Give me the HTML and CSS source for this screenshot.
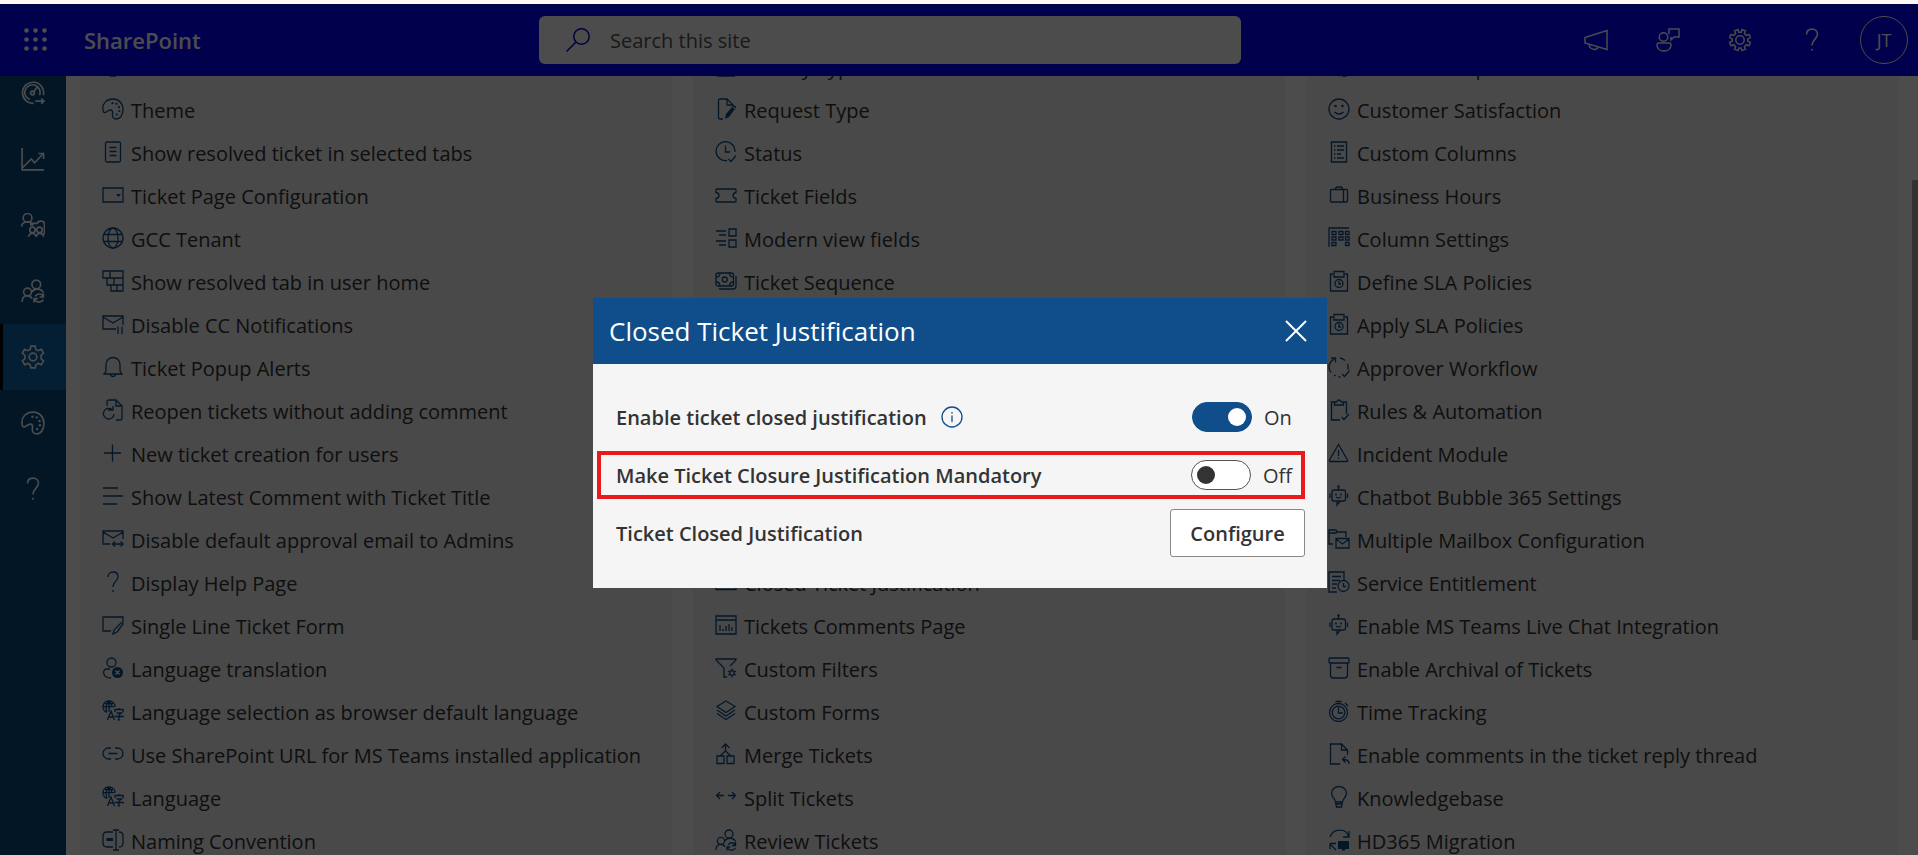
FILE: index.html
```html
<!DOCTYPE html>
<html lang="en">
<head>
<meta charset="utf-8">
<title>SharePoint - Settings</title>
<link rel="stylesheet" href="styles.css">
</head>
<body>
<svg class="sprite" aria-hidden="true">
  <symbol id="palette" viewBox="0 0 22 22"><path d="M1 12C0 5 5 1 11 1c6 0 10 4.500 10 10.500C21 17 18 21 14.500 21c-3.500 0-4.500-2.500-4-5.500.4-2.500-.5-3.500-2-3.500C5.500 12 4 15.500 2 14.500 1.400 14 1 13 1 12z"/><g class="f"><circle cx="10.500" cy="5.200" r="1.100"/><circle cx="14.500" cy="5.800" r="1.100"/><circle cx="17" cy="9.200" r="1.100"/><circle cx="17.300" cy="13" r="1.100"/><circle cx="14.800" cy="16.500" r="1.100"/></g></symbol>
  <symbol id="doc" viewBox="0 0 22 22"><rect x="3.500" y="1" width="15" height="20" rx="1.500"/><path d="M7.500 6.500h7M7.500 10.500h7M7.500 14.500h7"/></symbol>
  <symbol id="combo" viewBox="0 0 22 22"><path d="M1 4h20v14H1z"/><path class="f" d="M14 10h5l-2.500 3z"/></symbol>
  <symbol id="globe" viewBox="0 0 22 22"><circle cx="11" cy="11" r="10"/><ellipse cx="11" cy="11" rx="5" ry="10"/><path d="M2 7.500h18M2 14.500h18"/></symbol>
  <symbol id="bricks" viewBox="0 0 22 22"><path d="M1 1h20v20H9v-6H5V8H1zM1 8h20M5 15h16M8 1v7M12 8v7M15 15v6"/></symbol>
  <symbol id="mailpause" viewBox="0 0 22 22"><path d="M14 16H1V3h20v9M1 4l10 6 10-6M16 13.500v7.500M20 13.500v7.500"/></symbol>
  <symbol id="bell" viewBox="0 0 22 22"><path d="M4 15V8.500a7 7 0 0 1 14 0V15l2 3H2zM8.500 18a2.500 2.500 0 0 0 5 0"/></symbol>
  <symbol id="reopen" viewBox="0 0 22 22"><path d="M5 7V3q0-2 2-2h7l6 6v12q0 2-2 2h-4M14 1v6h6M10 10.500A5.300 5.300 0 1 0 12 15M6 11h5V7"/></symbol>
  <symbol id="plus" viewBox="0 0 22 22"><path d="M2 11h17M10.500 2.500v17"/></symbol>
  <symbol id="lines" viewBox="0 0 22 22"><path d="M1 3h15M1 11h20M1 19h14"/></symbol>
  <symbol id="mailarrow" viewBox="0 0 22 22"><path d="M8 16H1V3h20v8M1 4l10 6 10-6M10.500 16H21M13 13.500 10.500 16l2.500 2.500M18.500 13.500 21 16l-2.500 2.500"/></symbol>
  <symbol id="help" viewBox="0 0 22 22"><path d="M6 6c0-3 2-5 5-5s5 2 5 4.700c0 4.300-5 4.800-5 10.300"/><circle class="f" cx="11" cy="20" r=".9"/></symbol>
  <symbol id="form" viewBox="0 0 22 22"><path d="M9 17H1V3h20v5M11 20l1-4 7-7q2-1 2 1l-6 8z"/></symbol>
  <symbol id="userx" viewBox="0 0 22 22"><circle cx="9.500" cy="5.500" r="4.500"/><path d="M8 12H4c-4 1-3.500 9 5 9"/><circle class="f" cx="15.500" cy="15.500" r="5.500"/><path class="cut" d="m13.500 13.500 4 4m0-4-4 4"/></symbol>
  <symbol id="lang" viewBox="0 0 22 22"><path d="M5 12.500A6 6 0 1 1 13 7M1 6.700h11M7 .700v11M3 3.500h8M7 .700C3.500 4 3.500 9 5 12M7 .700Q10 4 10 7M5.500 20 9 11l3.500 9M6.500 17h5M13 12V9.500h8V12M17 9.500V8M14.500 13h5l-2.500 2v5l-1.500-.5M12.500 16.500H22"/></symbol>
  <symbol id="link" viewBox="0 0 22 22"><path d="M9 5H6.500a5.500 5.500 0 0 0 0 11H9M13 5h2.500a5.500 5.500 0 0 1 0 11H13M6.500 10.500h9"/></symbol>
  <symbol id="rename" viewBox="0 0 22 22"><path d="M11 3H5Q1 3 1 7v7q0 4 4 4h6M17 3q4 0 4 4v7q0 4-4 4M14 1v20M11 1h6M11 21h6"/><path class="w" d="M4.500 10.500H11"/></symbol>
  <symbol id="docedit" viewBox="0 0 22 22"><path d="M8 21H5q-1.500 0-1.500-1.500v-17Q3.500 1 5 1h7l6 6v2M12 1v6h6"/><path class="f" d="m10 21 1-5 6-7 3 2-6 8zM18 8l1-1 2.500 2-1 1.500z"/></symbol>
  <symbol id="clockok" viewBox="0 0 22 22"><path d="M12 19.500A9.500 9.500 0 1 1 20 11M10.500 4.500V11H15M13.500 18l2.500 2.500 5-6"/></symbol>
  <symbol id="ticket" viewBox="0 0 22 22"><path d="M2 5h18q1 0 1 1v2.500q-3 .5-3 3t3 3V17q0 1-1 1H2q-1 0-1-1v-2.500q3-.5 3-3t-3-3V6q0-1 1-1z"/></symbol>
  <symbol id="fields" viewBox="0 0 22 22"><path d="M1 4h10M4 8h7M1 14h10M4 18h7M14 2h7v7h-7zM14 13h7v7h-7z"/></symbol>
  <symbol id="cash" viewBox="0 0 22 22"><rect x="1" y="3" width="17.500" height="13" rx="2"/><circle cx="9.800" cy="9.500" r="2.500"/><path d="M1 7q4 0 4-4M1 12q4 0 4 4M18.500 7q-4 0-4-4M18.500 12q-4 0-4 4M21 6v10q0 3-3 3H4"/></symbol>
  <symbol id="barline" viewBox="0 0 22 22"><path d="M1 4h20v14.500H1z"/></symbol>
  <symbol id="chart" viewBox="0 0 22 22"><path d="M1 2h20v18H1zM1 6h20M5 17v-6M8 17v-2M11 17v-5M14 17v-7M17 17v-4"/></symbol>
  <symbol id="filter" viewBox="0 0 22 22"><path d="M12 20H9v-9L1 3V2h20v1l-6 6"/><circle cx="17" cy="16" r="2.300"/><path d="M17 11.500v2M17 18.500v2M13 14l2 1M19 17l2 1M13 18l2-1M19 15l2-1"/></symbol>
  <symbol id="layers" viewBox="0 0 22 22"><path d="m11 1 9 5.500-9 6-9-6zM2 10l9 6 9-6M2 13.500l9 6 9-6"/></symbol>
  <symbol id="merge" viewBox="0 0 22 22"><path d="M2 13h7v7.500H2zM12 13h7v7.500h-7zM10.500 1v7L5 13M10.500 8l5.500 5M6.500 5l4-4 4 4"/></symbol>
  <symbol id="split" viewBox="0 0 22 22"><path d="M9 9.500H1.500M5 6 1.500 9.500 5 13M13 9.500h7.500M17 6l3.500 3.500L17 13"/></symbol>
  <symbol id="users" viewBox="0 0 22 22"><circle cx="14" cy="5" r="4"/><circle cx="6" cy="12" r="3.600"/><path d="M1 21c0-7 7-7 9-3M10 12c1.500-3.500 8.500-4 10.500.5M20.500 13v3.500H17M12 21.500V18h3.500M20.500 16c-1.500-3-6-3-7.500 0M12.500 19c2 3 6 3 8 0"/></symbol>
  <symbol id="smile" viewBox="0 0 22 22"><circle cx="11" cy="11" r="10"/><path d="M6.500 14q4.500 4 9 0"/><g class="f"><circle cx="7.500" cy="8" r="1.300"/><circle cx="14.500" cy="8" r="1.300"/></g></symbol>
  <symbol id="columns" viewBox="0 0 22 22"><path d="M3.500 1h15v20h-15zM6 5h1.500M9 5h7M6 9h1.500M9 9h7M6 13h1.500M9 13h4M6 17h1.500M9 17h7"/></symbol>
  <symbol id="bag" viewBox="0 0 22 22"><rect x="2.500" y="5.500" width="17" height="12.500" rx="1"/><path d="M7.500 5.500q0-2.500 2-2.500h3q2 0 2 2.500M15.500 5.500V18"/></symbol>
  <symbol id="grid" viewBox="0 0 22 22"><path d="M1 20V1h20M4 4.500h4v3H4zM11 4.500h4v3h-4zM17.500 4.500H21v3h-3.500zM4 10h4v3H4zM11 10h4v3h-4zM17.500 10H21v3h-3.500zM4 15.500h4v3H4zM17.500 15.500H21v3h-3.500z"/></symbol>
  <symbol id="sla" viewBox="0 0 22 22"><path d="M5 4H2.500v17h17V4H17M6 1.500h10V7H6z"/><circle cx="11" cy="13.500" r="4"/><path d="M11 11v3h2"/></symbol>
  <symbol id="flow" viewBox="0 0 22 22"><path d="M6 3C0 7 0 13 3 16.500M3 2h4.500v4.500M12 2q3 .500 5 2.500M19.500 8q1 2.500.5 5.500M6 19l2 1M10.500 21h2M14 18l2.500 2.500 5-6"/></symbol>
  <symbol id="rules" viewBox="0 0 22 22"><path d="M6 3H3.500v18H12M16 3h2.500v12M6.500 3h2q2.500-4 5 0h2v3h-9zM13.500 18l2.500 2.500 5-5.500"/></symbol>
  <symbol id="warn" viewBox="0 0 22 22"><path d="M10.500 2.500 1.500 18q-.500 1.500 1 1.500h16q1.500 0 1-1.500zM10.500 8v6M10.500 15.500v1.500"/></symbol>
  <symbol id="bot" viewBox="0 0 22 22"><rect x="4" y="5" width="13.500" height="11" rx="2"/><path d="M10.500 1.500V5M2 8.500v4.500M19.500 8.500v4.500M9 16v4l3.500-4M8 12q2.500 2 5 0"/><g class="f"><circle cx="10.500" cy="1.500" r="1.200"/><circle cx="8" cy="9.500" r="1"/><circle cx="13" cy="9.500" r="1"/></g></symbol>
  <symbol id="mailbox" viewBox="0 0 22 22"><path d="M5 16H1V2h7l1 2h9v5M1 5h7l1-1M8 10.500h13V20H8zM8 11l6.500 5 6.500-5"/></symbol>
  <symbol id="service" viewBox="0 0 22 22"><path d="M9 21H1V1h15v8M4 5.500h9M4 9.500h8M4 13h5M4 17h4"/><circle cx="15.500" cy="15" r="5.500"/><path d="M15.500 12v3.500h2.500"/></symbol>
  <symbol id="archive" viewBox="0 0 22 22"><rect x="1" y="1" width="20" height="5" rx="1"/><path d="M2.500 6v12q0 3 3 3h11q3 0 3-3V6M8.500 10.500h5"/></symbol>
  <symbol id="timer" viewBox="0 0 22 22"><circle cx="10.500" cy="12.500" r="9"/><circle cx="10.500" cy="12.500" r="6.300"/><path d="M7.500 1.500h6M10.500 7v6H15M17 3l3 3"/></symbol>
  <symbol id="reply" viewBox="0 0 22 22"><path d="M12 21H2.500V1h11l6 6v5M13.500 1v6h6M21 21q.5-4.500-6-4.500M17.500 13.500l-3 3 3 3"/></symbol>
  <symbol id="bulb" viewBox="0 0 22 22"><path d="M7.500 16c0-3-4-4.500-4-9a7.500 6.500 0 0 1 15 0c0 4.500-4 6-4 9zM7.500 16l1 5h5l1-5M8 18h6"/></symbol>
  <symbol id="migrate" viewBox="0 0 22 22"><path d="M2 8C5-1 18-1 20.500 7M21 2v6h-6M2 14.500h6M2 14.500V20M2 15l6 6"/><path class="f" d="M10 12h11v8h-4v1.500h-3V20h-4z"/></symbol>
  <symbol id="gauge" viewBox="0 0 22 22"><path d="M11.500 20.500A9.700 9.700 0 1 1 20.500 13M8 17A7 7 0 1 1 17 13M11 10.500l4-5M13 18.500h8M18.500 16l2.500 2.500-2.500 2.500"/><circle cx="10.500" cy="11" r="1.700"/></symbol>
  <symbol id="trend" viewBox="0 0 22 22"><path d="M1 1v20h20M1 19.500l8.500-8.500 3 3.500 8-8.500M16 6h4.700v5"/></symbol>
  <symbol id="team" viewBox="0 0 22 22"><circle cx="6" cy="4.500" r="4"/><path d="M.500 12.500c0-5 9.500-6 10.500-1M9 12V9.500h6q.5-2 3-2 3.500 0 3.500 3V19h-2"/><circle cx="10.500" cy="15.500" r="2.500"/><circle cx="17" cy="15.500" r="2.500"/><path d="M6.500 21.500q4-6 7.500 0 3-6 7 0"/></symbol>
  <symbol id="gear" viewBox="0 0 22 22"><path d="M9 1h4l.6 3 2.200 1.200L18.700 4l2 3.500-2.300 2v3l2.300 2-2 3.500-2.900-1.100-2.200 1.200L13 21H9l-.6-2.900-2.200-1.200L3.300 18l-2-3.500 2.300-2v-3l-2.300-2 2-3.500 2.900 1.200L8.400 4z"/><circle cx="11" cy="11" r="3.500"/></symbol>
  <symbol id="cog" viewBox="0 0 24 24"><path d="M10 1.500l.7 2.700h2.600l.7-2.700 3.400 1.400-1 2.600 1.900 1.900 2.700-1 1.400 3.300-2.600 1.200v2.300l2.600 1.100-1.400 3.400-2.700-1-1.900 1.900 1 2.600-3.400 1.400-1-2.600h-2l-1 2.600-3.400-1.400 1-2.600-1.900-1.900-2.700 1-1.400-3.400 2.600-1.100v-2.300L1.600 9.700 3 6.400l2.700 1 1.900-1.900-1-2.600z"/><circle cx="12" cy="12" r="4.200"/></symbol>
  <symbol id="mega" viewBox="0 0 24 24"><path d="M23 2.500v19L1 15V9.500zM5 16.500c1 6 8 6 9 2.500"/></symbol>
  <symbol id="feedback" viewBox="0 0 24 24"><circle cx="7.500" cy="9" r="4.300"/><path d="M2 15h11q2 0 2 2c0 8-14 8-14 0q0-2 1-2zM13 6V1h10v8h-5l-3 3V9"/></symbol>
  <symbol id="search" viewBox="0 0 24 24"><circle cx="15.500" cy="8.500" r="7.700"/><path d="M10 14 .5 23.500"/></symbol>
  <symbol id="waffle" viewBox="0 0 24 24"><g class="f"><circle cx="2.500" cy="2.500" r="2.300"/><circle cx="11.500" cy="2.500" r="2.300"/><circle cx="20.500" cy="2.500" r="2.300"/><circle cx="2.500" cy="11.500" r="2.300"/><circle cx="11.500" cy="11.500" r="2.300"/><circle cx="20.500" cy="11.500" r="2.300"/><circle cx="2.500" cy="20.500" r="2.300"/><circle cx="11.500" cy="20.500" r="2.300"/><circle cx="20.500" cy="20.500" r="2.300"/></g></symbol>
  <symbol id="close" viewBox="0 0 22 22"><path d="m1 1 20 20M21 1 1 21"/></symbol>
  <symbol id="info" viewBox="0 0 22 22"><circle cx="11" cy="11" r="10"/><path d="M11 9.500V16M11 6v1.500"/></symbol>
</svg>

<div class="page">
  <header class="topbar">
    <div class="brand">
      <button class="bar-btn" aria-label="App launcher"><svg class="icon big"><use href="#waffle"/></svg></button>
      <a class="brand-name" href="#">SharePoint</a>
    </div>
    <label class="search">
      <svg class="icon big"><use href="#search"/></svg>
      <input type="search" placeholder="Search this site" aria-label="Search this site">
    </label>
    <div class="actions">
      <button class="bar-btn" aria-label="Announcements"><svg class="icon big"><use href="#mega"/></svg></button>
      <button class="bar-btn" aria-label="Feedback"><svg class="icon big"><use href="#feedback"/></svg></button>
      <button class="bar-btn" aria-label="Settings"><svg class="icon big"><use href="#cog"/></svg></button>
      <button class="bar-btn" aria-label="Help"><svg class="icon big"><use href="#help"/></svg></button>
      <button class="bar-btn" aria-label="Account"><span class="avatar">JT</span></button>
    </div>
  </header>

  <div class="body">
    <nav class="rail" aria-label="Main">
      <a href="#" aria-label="Dashboard"><svg class="icon big"><use href="#gauge"/></svg></a>
      <a href="#" aria-label="Reports"><svg class="icon big"><use href="#trend"/></svg></a>
      <a href="#" aria-label="Teams"><svg class="icon big"><use href="#team"/></svg></a>
      <a href="#" aria-label="Users"><svg class="icon big"><use href="#users"/></svg></a>
      <a class="active" href="#" aria-label="Settings"><svg class="icon big"><use href="#gear"/></svg></a>
      <a href="#" aria-label="Theme"><svg class="icon big"><use href="#palette"/></svg></a>
      <a href="#" aria-label="Help"><svg class="icon big"><use href="#help"/></svg></a>
    </nav>

    <main class="content">
      <ul class="card">
        <li><a href="#"><svg class="icon"><use href="#bulb"/></svg>General</a></li>
        <li><a href="#"><svg class="icon"><use href="#palette"/></svg>Theme</a></li>
        <li><a href="#"><svg class="icon"><use href="#doc"/></svg>Show resolved ticket in selected tabs</a></li>
        <li><a href="#"><svg class="icon"><use href="#combo"/></svg>Ticket Page Configuration</a></li>
        <li><a href="#"><svg class="icon"><use href="#globe"/></svg>GCC Tenant</a></li>
        <li><a href="#"><svg class="icon"><use href="#bricks"/></svg>Show resolved tab in user home</a></li>
        <li><a href="#"><svg class="icon"><use href="#mailpause"/></svg>Disable CC Notifications</a></li>
        <li><a href="#"><svg class="icon"><use href="#bell"/></svg>Ticket Popup Alerts</a></li>
        <li><a href="#"><svg class="icon"><use href="#reopen"/></svg>Reopen tickets without adding comment</a></li>
        <li><a href="#"><svg class="icon"><use href="#plus"/></svg>New ticket creation for users</a></li>
        <li><a href="#"><svg class="icon"><use href="#lines"/></svg>Show Latest Comment with Ticket Title</a></li>
        <li><a href="#"><svg class="icon"><use href="#mailarrow"/></svg>Disable default approval email to Admins</a></li>
        <li><a href="#"><svg class="icon"><use href="#help"/></svg>Display Help Page</a></li>
        <li><a href="#"><svg class="icon"><use href="#form"/></svg>Single Line Ticket Form</a></li>
        <li><a href="#"><svg class="icon"><use href="#userx"/></svg>Language translation</a></li>
        <li><a href="#"><svg class="icon"><use href="#lang"/></svg>Language selection as browser default language</a></li>
        <li><a href="#"><svg class="icon"><use href="#link"/></svg>Use SharePoint URL for MS Teams installed application</a></li>
        <li><a href="#"><svg class="icon"><use href="#lang"/></svg>Language</a></li>
        <li><a href="#"><svg class="icon"><use href="#rename"/></svg>Naming Convention</a></li>
      </ul>
      <ul class="card">
        <li><a href="#"><svg class="icon"><use href="#sla"/></svg>Priority Type</a></li>
        <li><a href="#"><svg class="icon"><use href="#docedit"/></svg>Request Type</a></li>
        <li><a href="#"><svg class="icon"><use href="#clockok"/></svg>Status</a></li>
        <li><a href="#"><svg class="icon"><use href="#ticket"/></svg>Ticket Fields</a></li>
        <li><a href="#"><svg class="icon"><use href="#fields"/></svg>Modern view fields</a></li>
        <li><a href="#"><svg class="icon"><use href="#cash"/></svg>Ticket Sequence</a></li>
        <li></li>
        <li></li>
        <li></li>
        <li></li>
        <li></li>
        <li></li>
        <li><a href="#"><svg class="icon"><use href="#barline"/></svg>Closed Ticket Justification</a></li>
        <li><a href="#"><svg class="icon"><use href="#chart"/></svg>Tickets Comments Page</a></li>
        <li><a href="#"><svg class="icon"><use href="#filter"/></svg>Custom Filters</a></li>
        <li><a href="#"><svg class="icon"><use href="#layers"/></svg>Custom Forms</a></li>
        <li><a href="#"><svg class="icon"><use href="#merge"/></svg>Merge Tickets</a></li>
        <li><a href="#"><svg class="icon"><use href="#split"/></svg>Split Tickets</a></li>
        <li><a href="#"><svg class="icon"><use href="#users"/></svg>Review Tickets</a></li>
      </ul>
      <ul class="card">
        <li><a href="#"><svg class="icon"><use href="#users"/></svg>Service Group</a></li>
        <li><a href="#"><svg class="icon"><use href="#smile"/></svg>Customer Satisfaction</a></li>
        <li><a href="#"><svg class="icon"><use href="#columns"/></svg>Custom Columns</a></li>
        <li><a href="#"><svg class="icon"><use href="#bag"/></svg>Business Hours</a></li>
        <li><a href="#"><svg class="icon"><use href="#grid"/></svg>Column Settings</a></li>
        <li><a href="#"><svg class="icon"><use href="#sla"/></svg>Define SLA Policies</a></li>
        <li><a href="#"><svg class="icon"><use href="#sla"/></svg>Apply SLA Policies</a></li>
        <li><a href="#"><svg class="icon"><use href="#flow"/></svg>Approver Workflow</a></li>
        <li><a href="#"><svg class="icon"><use href="#rules"/></svg>Rules &amp; Automation</a></li>
        <li><a href="#"><svg class="icon"><use href="#warn"/></svg>Incident Module</a></li>
        <li><a href="#"><svg class="icon"><use href="#bot"/></svg>Chatbot Bubble 365 Settings</a></li>
        <li><a href="#"><svg class="icon"><use href="#mailbox"/></svg>Multiple Mailbox Configuration</a></li>
        <li><a href="#"><svg class="icon"><use href="#service"/></svg>Service Entitlement</a></li>
        <li><a href="#"><svg class="icon"><use href="#bot"/></svg>Enable MS Teams Live Chat Integration</a></li>
        <li><a href="#"><svg class="icon"><use href="#archive"/></svg>Enable Archival of Tickets</a></li>
        <li><a href="#"><svg class="icon"><use href="#timer"/></svg>Time Tracking</a></li>
        <li><a href="#"><svg class="icon"><use href="#reply"/></svg>Enable comments in the ticket reply thread</a></li>
        <li><a href="#"><svg class="icon"><use href="#bulb"/></svg>Knowledgebase</a></li>
        <li><a href="#"><svg class="icon"><use href="#migrate"/></svg>HD365 Migration</a></li>
      </ul>
      <div class="scroll-thumb"></div>
    </main>
  </div>
</div>

<div class="overlay">
  <section class="dialog" role="dialog" aria-modal="true" aria-labelledby="dlg-title">
    <header class="dialog-head">
      <h2 id="dlg-title">Closed Ticket Justification</h2>
      <button class="close" aria-label="Close"><svg class="icon"><use href="#close"/></svg></button>
    </header>
    <div class="dialog-body">
      <div class="row">
        <label for="enable">Enable ticket closed justification</label>
        <svg class="icon info"><use href="#info"/></svg>
        <span class="toggle"><input id="enable" type="checkbox" role="switch" checked><span>On</span></span>
      </div>
      <div class="row marked">
        <label for="mandatory">Make Ticket Closure Justification Mandatory</label>
        <span class="toggle"><input id="mandatory" type="checkbox" role="switch"><span>Off</span></span>
      </div>
      <div class="row">
        <span id="cfg-label">Ticket Closed Justification</span>
        <button class="configure" aria-describedby="cfg-label">Configure</button>
      </div>
    </div>
  </section>
</div>
</body>
</html>
```
FILE: styles.css
```css
* { box-sizing: border-box; }

body {
  margin: 0;
  font-family: "Open Sans", "Noto Sans", sans-serif;
  font-size: 20px;
  color: #333;
  background: #fff6f2;
}

button, input { font: inherit; color: inherit; }
a { color: inherit; text-decoration: none; }
.sprite { position: absolute; width: 0; height: 0; }

.icon {
  width: 22px;
  height: 22px;
  flex: none;
  fill: none;
  stroke: currentColor;
  stroke-width: 1.3;
  color: #0f4e8a;
}
.icon.big { width: 24px; height: 24px; color: inherit; stroke-width: 1.5; }
.f { fill: currentColor; stroke: none; }
.cut { stroke: #f4f4f4; stroke-width: 1.6; }
.w { stroke-width: 3; }

.page {
  height: 100vh;
  padding-top: 4px;
  display: flex;
  flex-direction: column;
  overflow: hidden;
}

.topbar {
  flex: none;
  height: 72px;
  display: grid;
  grid-template-columns: 539fr 702fr 677fr;
  align-items: center;
  background: #00f;
  color: #fff;
}
.brand, .actions { display: flex; align-items: center; }
.actions { justify-content: flex-end; margin-right: -2px; }
.bar-btn {
  width: 72px;
  height: 72px;
  padding: 0;
  border: 0;
  background: none;
  display: grid;
  place-items: center;
}
.brand-name { padding-left: 12px; font-size: 22px; font-weight: 600; }
.search {
  height: 48px;
  padding: 0 27px;
  display: flex;
  align-items: center;
  gap: 20px;
  border-radius: 6px;
  background: #fff;
  color: #00c;
}
.search input {
  flex: 1;
  min-width: 0;
  padding: 0;
  border: 0;
  outline: 0;
  background: none;
}
.search input::placeholder { color: #555; opacity: 1; }
.avatar {
  width: 48px;
  height: 48px;
  border: 1px solid #fff;
  border-radius: 50%;
  display: grid;
  place-items: center;
  font-size: 18px;
}

.body { flex: 1; min-height: 0; display: flex; background: #fff; }

.rail {
  flex: none;
  width: 66px;
  display: flex;
  flex-direction: column;
  background: #074a80;
  color: #fff;
  overflow: hidden;
}
.rail a {
  flex: none;
  height: 66px;
  display: grid;
  place-items: center;
}
.rail a:first-child { margin-top: -16px; }
.rail .active {
  padding-right: 3px;
  border-left: 3px solid #000;
  border-radius: 2px;
  background: #0f66ac;
}

.content {
  position: relative;
  flex: 1;
  padding: 0 20px 0 14px;
  display: grid;
  grid-template-columns: repeat(3, 1fr);
  gap: 21px;
  overflow: hidden;
}
.card {
  margin: -30px 0 0;
  padding: 0 22px;
  list-style: none;
  background: #f5f5f5;
}
.card li { height: 43px; }
.card a {
  height: 43px;
  display: flex;
  align-items: center;
  gap: 7px;
  white-space: nowrap;
}
.card .icon { margin-bottom: 4px; }
.scroll-thumb {
  position: absolute;
  top: 104px;
  right: 0;
  width: 6px;
  height: 59%;
  background: #aaa;
}

.overlay {
  position: fixed;
  inset: 4px 0 0;
  display: flex;
  justify-content: center;
  align-items: center;
  padding: 27px 0 0 2px;
  background: rgba(0, 0, 0, .7);
}
.dialog { width: 734px; background: #f5f5f5; }
.dialog-head {
  height: 66px;
  padding: 0 16px;
  display: flex;
  align-items: center;
  justify-content: space-between;
  background: #0f4e8a;
  color: #fff;
}
.dialog-head h2 { margin: 0; font-size: 26px; font-weight: 400; }
.close { padding: 4px; border: 0; background: none; display: grid; }
.close .icon { color: #fff; stroke-width: 2; }

.dialog-body {
  padding: 26px 22px 28px 4px;
  display: flex;
  flex-direction: column;
  gap: 7px;
}
.row {
  min-height: 54px;
  padding-left: 19px;
  display: flex;
  align-items: center;
  font-weight: 600;
}
.row > :last-child { margin-left: auto; }
.row.marked {
  min-height: 48px;
  padding: 0 8px 0 15px;
  border: 4px solid #e81a1c;
}
.info { margin-left: 14px; }
.toggle {
  width: 113px;
  display: flex;
  align-items: center;
  gap: 12px;
  font-weight: 400;
}
.marked .toggle { width: 102px; }
.toggle input {
  appearance: none;
  flex: none;
  width: 60px;
  height: 30px;
  margin: 0;
  padding: 5px;
  display: flex;
  border: 1px solid #555;
  border-radius: 15px;
  background: #fff;
}
.toggle input::before {
  content: "";
  width: 18px;
  height: 18px;
  border-radius: 50%;
  background: #333;
}
.toggle input:checked {
  justify-content: flex-end;
  border-color: #0f4e8a;
  background: #0f4e8a;
}
.toggle input:checked::before { background: #fff; }
.configure {
  width: 135px;
  height: 48px;
  padding: 0;
  border: 1px solid #888;
  border-radius: 3px;
  background: #fff;
  font-weight: 600;
}
```
